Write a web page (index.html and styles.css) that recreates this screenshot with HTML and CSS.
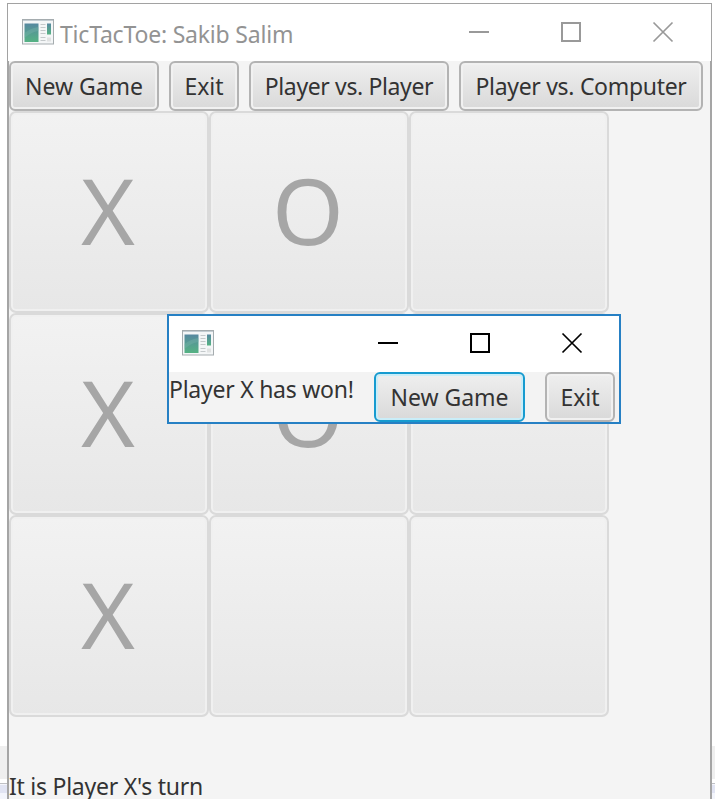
FILE: index.html
```
<!DOCTYPE html>
<html lang="en">
<head>
<meta charset="utf-8">
<title>TicTacToe: Sakib Salim</title>
<link rel="stylesheet" href="styles.css">
</head>
<body>
<svg class="defs" width="0" height="0">
  <defs>
    <linearGradient id="pane" x1="0" y1="0" x2="0" y2="1"><stop offset="0" stop-color="#5688a0"/><stop offset="1" stop-color="#55b283"/></linearGradient>
    <symbol id="app" viewBox="0 0 32 26">
      <rect x=".5" y=".5" width="31" height="24.5" fill="#f4f6f7" stroke="#a5acaf"/>
      <path d="M1 1.5h30" stroke="#c3ccd2"/>
      <rect x="2.5" y="4.5" width="14" height="18.5" fill="url(#pane)"/>
      <path d="M2.5 14Q9 9 16.500 8V12Q9 13 2.500 19Z" fill="#78b5ab" opacity=".4"/>
      <path d="M18.500 5.500h5M18.500 8.500h5M18.500 11.500h5M18.500 14.500h5M18.500 18.500h5M18.500 21.500h5" stroke="#c4c9cb"/>
      <rect x="25" y="4.500" width="4" height="11" fill="url(#pane)"/>
      <path d="M25 18.500h4v4h-4z" fill="#e0e2e2"/>
    </symbol>
    <symbol id="min" viewBox="0 0 22 22"><path d="M1 11h20" stroke="currentColor" stroke-width="2"/></symbol>
    <symbol id="max" viewBox="0 0 22 22"><rect x="2" y="2" width="18" height="18" fill="none" stroke="currentColor" stroke-width="2"/></symbol>
    <symbol id="close" viewBox="0 0 22 22"><path d="M1.500 1.500l19 19m0-19l-19 19" stroke="currentColor" stroke-width="1.700"/></symbol>
  </defs>
</svg>
<div class="desktop">
  <main class="window">
    <header class="titlebar">
      <svg class="app-icon"><use href="#app"/></svg>
      <span class="title">TicTacToe: Sakib Salim</span>
      <div class="controls"><svg><use href="#min"/></svg><svg><use href="#max"/></svg><svg><use href="#close"/></svg></div>
    </header>
    <div class="content">
      <nav class="toolbar">
        <button class="btn new">New Game</button>
        <button class="btn exit">Exit</button>
        <button class="btn pvp">Player vs. Player</button>
        <button class="btn pvc">Player vs. Computer</button>
      </nav>
      <section class="board">
        <div class="cell">X</div><div class="cell">O</div><div class="cell"></div>
        <div class="cell">X</div><div class="cell">O</div><div class="cell"></div>
        <div class="cell">X</div><div class="cell"></div><div class="cell"></div>
      </section>
      <p class="status">It is Player X's turn</p>
    </div>
  </main>
  <aside class="dialog">
    <header class="dialog-bar">
      <svg class="app-icon"><use href="#app"/></svg>
      <div class="controls"><svg><use href="#min"/></svg><svg><use href="#max"/></svg><svg><use href="#close"/></svg></div>
    </header>
    <div class="dialog-body">
      <span class="message">Player X has won!</span>
      <button class="btn new focused">New Game</button>
      <button class="btn exit">Exit</button>
    </div>
  </aside>
</div>
</body>
</html>
```
FILE: styles.css
```
* { box-sizing: border-box; }
body { margin: 0; overflow: hidden; font-family: "Noto Sans", "Open Sans", sans-serif; font-size: 23px; color: #333; }
.defs { position: absolute; }
.desktop {
  position: relative; width: 715px; height: 799px; padding: 3px 3px 0 7px; overflow: hidden;
  background: linear-gradient(#fff 746px, #efefef 746px 779px, #fff 779px 783px, #bfc0c4 783px 784px, #f5f6fc 784px 785px, #e1e4f3 785px 793px, #f3f5fc 793px);
}
.window { display: flex; flex-direction: column; width: 705px; height: 796px; }
.titlebar { flex: none; display: flex; align-items: center; height: 58px; padding: 0 37px 1px 14px; background: #fff; border: 1px solid #a2a2a2; border-bottom: 0; color: #999; }
.app-icon { width: 32px; height: 26px; flex: none; }
.title { margin-left: 6px; line-height: 32px; padding-top: 3px; letter-spacing: -.2px; white-space: nowrap; color: #939393; }
.controls { display: flex; gap: 70px; margin-left: auto; }
.controls svg { width: 22px; height: 22px; }
.content { flex: 1; background: #f4f4f4; border: solid #a5a5a5; border-width: 0 2px; }
.toolbar { display: flex; gap: 10px; height: 50px; }
.btn {
  flex: none; height: 50px; padding: 0; border: 2px solid #b3b3b3; border-radius: 6px;
  background: linear-gradient(#efefef, #d9d9d9); box-shadow: inset 0 0 0 2px #f1f1f1;
  font: inherit; line-height: 32px; color: #333; white-space: nowrap;
}
.new { width: 150px; }
.exit { width: 70px; }
.pvp { width: 200px; letter-spacing: -.37px; }
.pvc { width: 244px; letter-spacing: -.3px; }
.board { display: grid; grid-template-columns: repeat(3, 200px); grid-auto-rows: 202px; }
.cell {
  display: flex; align-items: center; justify-content: center; padding: 0 2px 4px 0;
  border: 2px solid #dadada; border-radius: 7px; background: linear-gradient(#f2f2f2, #e7e7e7);
  box-shadow: inset 0 0 0 2px #f0f0f0; font-size: 92px; line-height: 120px; color: #a6a6a6;
}
.status { margin: 53px 0 0; line-height: 32px; letter-spacing: -.25px; }
.dialog { position: absolute; left: 167px; top: 314px; width: 454px; height: 110px; border: 2px solid #2680c4; background: #f3f3f3; }
.dialog-bar { display: flex; align-items: center; height: 56px; padding: 0 36px 2px 13px; background: #fff; color: #000; }
.dialog-body { display: flex; height: 50px; }
.message { flex: none; width: 205px; padding-top: 1px; line-height: 32px; letter-spacing: -.25px; white-space: nowrap; }
.dialog .new { width: 151px; margin-right: 20px; }
.focused { border-color: #169bd0; box-shadow: inset 0 0 0 2px #c9edf8; }
```
